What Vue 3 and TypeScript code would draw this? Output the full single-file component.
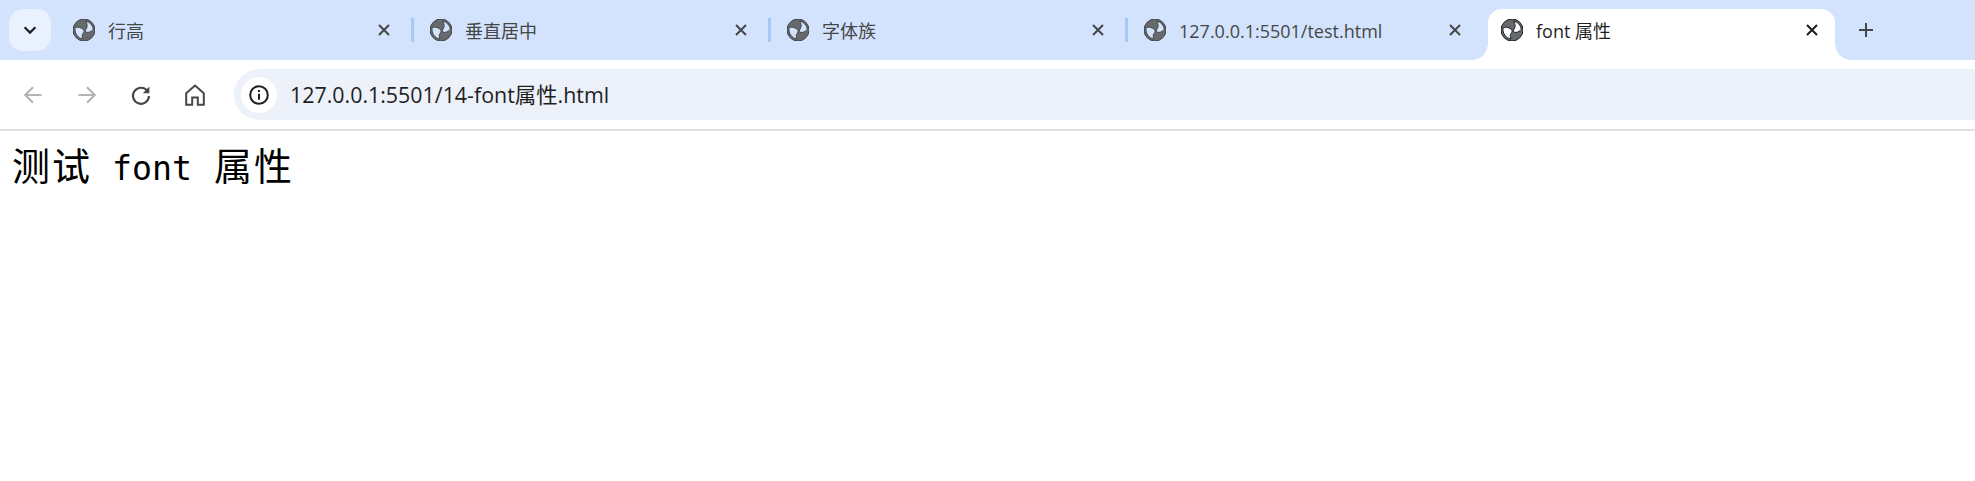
<script setup lang="ts">
interface Tab { title: string; active?: boolean }
const tabs: Tab[] = [
  { title: '行高' },
  { title: '垂直居中' },
  { title: '字体族' },
  { title: '127.0.0.1:5501/test.html' },
  { title: 'font 属性', active: true },
]
</script>

<template>
  <div class="browser">
    <header class="strip">
      <button class="search-btn" aria-label="tabs">
        <svg width="16" height="16" viewBox="0 0 16 16"><path d="M2.6 5.2 8 10.6l5.4-5.4" fill="none" stroke="#1f1f1f" stroke-width="2.2" /></svg>
      </button>
      <div class="tabs">
        <div v-for="(t, i) in tabs" :key="i" class="tab" :class="{ active: t.active, sep: i < 3 }">
          <svg class="globe" width="22" height="22" viewBox="0 0 22 22">
            <path fill-rule="evenodd" fill="#666a6f" d="M11 0a11 11 0 1 0 0 22a11 11 0 1 0 0-22Z M2 8.8C5 7.2 9 9 10.8 10.8C12 12.6 10 14.2 9.4 15.6C9 17 9.4 18.8 10 20C5 19.4 1.4 14.4 2 8.8Z M12.6 2.2C16.8 3 19.8 6.2 20.2 10.4C18.4 12.8 15.4 14 13.2 13.2C11.6 12.2 12.8 10.2 13.6 9C14.6 7.2 14.2 4.2 12.6 2.2Z" />
          </svg>
          <span class="title">{{ t.title }}</span>
          <svg class="close" width="12" height="12" viewBox="0 0 12 12"><path d="M1 1l10 10M11 1 1 11" fill="none" stroke-width="2" /></svg>
        </div>
      </div>
      <svg class="plus" width="16" height="16" viewBox="0 0 16 16"><path d="M8 1v14M1 8h14" fill="none" stroke="#474747" stroke-width="2" /></svg>
    </header>

    <nav class="toolbar">
      <div class="nav-icons">
        <svg class="nav-icon" width="20" height="20" viewBox="0 0 20 20"><path d="M18.5 10H2.5M10 2.2 2.2 10l7.8 7.8" fill="none" stroke="#b0b2b4" stroke-width="2" /></svg>
        <svg class="nav-icon" width="20" height="20" viewBox="0 0 20 20"><path d="M1.5 10h16M10 2.2l7.8 7.8-7.8 7.8" fill="none" stroke="#b0b2b4" stroke-width="2" /></svg>
        <svg class="nav-icon" width="20" height="20" viewBox="0 0 20 20"><path d="M16.6 6.2A8 8 0 1 0 18 11" fill="none" stroke="#474747" stroke-width="2.2" /><path d="M18.4 1.6v6.6h-6.6z" fill="#474747" /></svg>
        <svg class="nav-icon" width="20" height="22" viewBox="0 0 20 22"><path d="M1.2 9.2 10 1.6l8.8 7.6v11.6h-6V13.4H7.2v7.4h-6z" fill="none" stroke="#474747" stroke-width="2" /></svg>
      </div>
      <div class="omnibox">
        <span class="info">
          <svg width="20" height="20" viewBox="0 0 20 20"><circle cx="10" cy="10" r="8.8" fill="none" stroke="#1f1f1f" stroke-width="2" /><path d="M10 8.8v6M10 5v2" fill="none" stroke="#1f1f1f" stroke-width="2" /></svg>
        </span>
        <span class="url">127.0.0.1:5501/14-font属性.html</span>
      </div>
    </nav>

    <main class="page">
      <p class="sample"><span class="cjk">测试</span> font <span class="cjk second">属性</span></p>
    </main>
  </div>
</template>

<style>
html, body { margin: 0; background: #fff; }
</style>

<style scoped>
.browser {
  width: 1975px;
  height: 481px;
  display: flex;
  flex-direction: column;
  overflow: hidden;
  background: #fff;
  font-family: "Open Sans", "Noto Sans CJK SC", sans-serif;
}
.strip {
  height: 60px;
  flex: none;
  display: flex;
  align-items: flex-end;
  background: #d3e3fd;
}
.search-btn {
  width: 42px;
  height: 42px;
  margin: 0 9px 9px;
  padding: 0;
  border: 0;
  border-radius: 14px;
  background: #e9f0fe;
  display: flex;
  align-items: center;
  justify-content: center;
}
.tabs {
  display: flex;
  gap: 10px;
}
.tab {
  position: relative;
  width: 347px;
  height: 51px;
  box-sizing: border-box;
  padding: 0 17px 9px 13px;
  display: flex;
  align-items: center;
  color: #444746;
  stroke: #444746;
}
.tab.sep::after {
  content: "";
  position: absolute;
  right: -7px;
  top: 9px;
  width: 3px;
  height: 24px;
  background: #a8c7fa;
}
.tab.active {
  background: #fff;
  border-radius: 14px 14px 0 0;
  color: #1f1f1f;
  stroke: #1f1f1f;
}
.tab.active::before,
.tab.active::after {
  content: "";
  position: absolute;
  bottom: 0;
  width: 16px;
  height: 16px;
}
.tab.active::before {
  left: -16px;
  background: radial-gradient(circle at 0 0, transparent 15.5px, #fff 16px);
}
.tab.active::after {
  right: -16px;
  background: radial-gradient(circle at 100% 0, transparent 15.5px, #fff 16px);
}
.globe { flex: none; }
.title {
  flex: 1;
  margin: 2px 0 0 13px;
  font-size: 18px;
  line-height: 22px;
  white-space: nowrap;
}
.close { flex: none; }
.plus { margin: 0 0 22px 23px; }
.toolbar {
  height: 69px;
  flex: none;
  box-sizing: border-box;
  padding-top: 9px;
  display: flex;
  align-items: flex-start;
  background: #fff;
  border-radius: 14px 0 0 0;
  position: relative;
}
.nav-icons {
  width: 234px;
  height: 51px;
  flex: none;
  box-sizing: border-box;
  padding-left: 23px;
  display: flex;
  align-items: center;
}
.nav-icon { margin-right: 34px; flex: none; }
.omnibox {
  flex: 1;
  height: 51px;
  box-sizing: border-box;
  padding-left: 7px;
  display: flex;
  align-items: center;
  background: #ecf1fa;
  border-radius: 25.5px 0 0 25.5px;
}
.info {
  width: 36px;
  height: 36px;
  border-radius: 50%;
  background: #fff;
  display: flex;
  align-items: center;
  justify-content: center;
  flex: none;
}
.url {
  margin: 0 0 2px 13px;
  font-size: 21.4px;
  color: #1f1f1f;
  white-space: nowrap;
}
.page {
  flex: 1;
  border-top: 2px solid #e0e0e0;
  padding: 0 0 0 12px;
}
.sample {
  margin: 11px 0 0;
  font-family: "DejaVu Sans Mono", monospace;
  font-size: 33.2px;
  line-height: 44px;
  white-space: pre;
  color: #000;
}
.cjk {
  font-family: "Noto Sans CJK SC", sans-serif;
  font-size: 38px;
  letter-spacing: 2px;
}
.second { margin-left: 2px; }
</style>
